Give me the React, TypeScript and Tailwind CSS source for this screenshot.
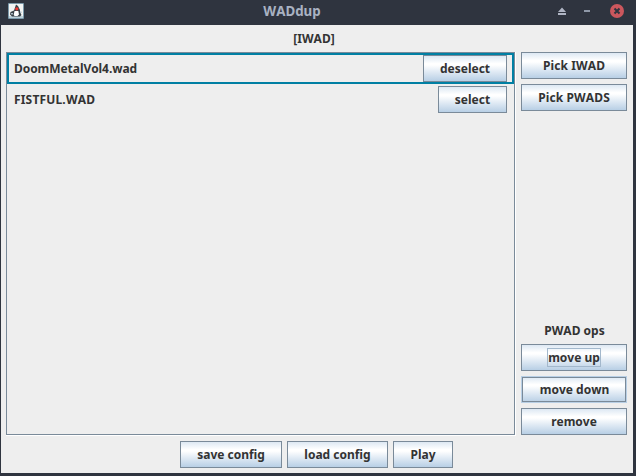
import React from "react";

type ButtonProps = {
  label: string;
  className?: string;
  state?: "normal" | "focused" | "hovered";
};

function MetalButton({ label, className = "", state = "normal" }: ButtonProps) {
  const frame =
    state === "hovered"
      ? "border-[#b8cfe5] pl-px shadow-[inset_0_0_0_1px_#7a8a99]"
      : "border-[#7a8a99]";
  return (
    <button
      type="button"
      className={`flex h-[27px] shrink-0 items-center justify-center border bg-[linear-gradient(to_bottom,#dde8f3_0%,#ffffff_30%,#ffffff_36%,#dde8f3_66%,#b8cfe5_100%)] ${frame} ${className}`}
    >
      <span
        className={
          state === "focused"
            ? "flex h-[19px] w-[54px] items-center justify-center border border-[#a3b8cc]"
            : ""
        }
      >
        {label}
      </span>
    </button>
  );
}

function JavaIcon() {
  return (
    <svg className="size-4" viewBox="0 0 16 16">
      <rect width="16" height="16" rx="1" fill="#7d9aab" />
      <rect x="1" y="1" width="14" height="14" fill="#f3f4f3" />
      <path d="M1 13h14v2H1z" fill="#bdd1da" />
      <path d="M8 1.5 10 3l2 4v2l1.5 3-1.5 1.5H4L2 11.5 2.5 9 6 7.5z" fill="#3a4248" />
      <path d="M6.5 8h3.8l.7 3.5-1.5 1.5h-3l-.8-1.2z" fill="#fff" />
      <path d="M3 10h2v1.5H3zM12 8.5h1.5V10H12z" fill="#a9bac4" />
      <circle cx="8.8" cy="5.8" r="1.6" fill="#f13732" />
    </svg>
  );
}

function TitleBar() {
  return (
    <header className="flex h-[25px] items-center bg-[#2f343f] pr-[12px] pl-2">
      <div className="flex w-[76px] items-center pb-[3px]">
        <JavaIcon />
      </div>
      <h1 className="flex-1 pb-[4px] text-center text-[13.33px] leading-[20px] text-[#a9b2c2]">
        WADdup
      </h1>
      <div className="flex w-[124px] items-center justify-end pb-[3px]">
        <svg className="mr-[18px] h-[14px] w-2" viewBox="0 0 8 14">
          <path d="M4 3.5 8 8H0zM0 9h8v2H0z" fill="#b0b5c4" />
        </svg>
        <svg className="mr-5 h-[14px] w-[6px]" viewBox="0 0 6 14">
          <path d="M0 6h6v2H0z" fill="#8f98a8" />
        </svg>
        <svg className="size-[14px]" viewBox="0 0 14 14">
          <circle cx="7" cy="7" r="7" fill="#cc575d" />
          <path d="m4.5 4.5 5 5m0-5-5 5" stroke="#2f343f" strokeWidth="2" />
        </svg>
      </div>
    </header>
  );
}

function FileRow({ name, selected = false }: { name: string; selected?: boolean }) {
  return (
    <div
      className={`flex h-[31px] items-center justify-between border-2 pr-[5px] pl-[5px] ${
        selected ? "border-[#007fa3]" : "border-transparent"
      }`}
    >
      <span className={selected ? "tracking-[-0.06px]" : "tracking-[0.17px]"}>{name}</span>
      <MetalButton
        label={selected ? "deselect" : "select"}
        className={selected ? "w-[84px]" : "w-[69px]"}
      />
    </div>
  );
}

export default function App() {
  return (
    <div className="h-[476px] w-[636px] bg-[#2f343f] font-['Noto_Sans',sans-serif] text-[12px] leading-[17px] font-bold whitespace-nowrap text-[#333333] [font-kerning:none]">
      <TitleBar />
      <main className="ml-px flex h-[448px] w-[632px] flex-col bg-[#eeeeee]">
        <div className="flex h-[27px] items-center justify-center pr-[6px]">[IWAD]</div>
        <div className="flex h-[384px] pr-[6px] pl-[5px]">
          <div className="mr-[5px] w-[510px] border-r border-b border-white">
            <div className="h-[383px] border border-[#7a8a99]">
              <FileRow name="DoomMetalVol4.wad" selected />
              <FileRow name="FISTFUL.WAD" />
            </div>
          </div>
          <aside className="flex h-[383px] w-[106px] flex-col gap-[5px]">
            <MetalButton label="Pick IWAD" className="tracking-[0.1px]" />
            <MetalButton label="Pick PWADS" className="tracking-[0.12px]" />
            <div className="mt-auto pl-px text-center">PWAD ops</div>
            <MetalButton label="move up" state="focused" />
            <MetalButton label="move down" state="hovered" />
            <MetalButton label="remove" />
          </aside>
        </div>
        <footer className="flex gap-[5px] pt-[5px] pl-[179px]">
          <MetalButton label="save config" className="w-[102px]" />
          <MetalButton label="load config" className="w-[101px]" />
          <MetalButton label="Play" className="w-[60px]" />
        </footer>
      </main>
    </div>
  );
}
